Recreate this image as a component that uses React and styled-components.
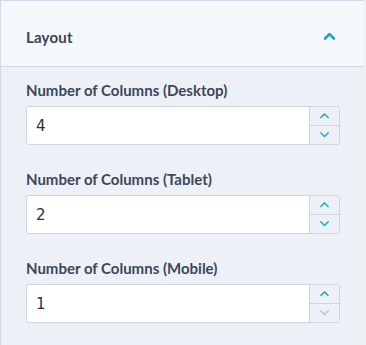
import React, { useState } from "react";
import styled, { createGlobalStyle } from "styled-components";

const Global = createGlobalStyle`
  html, body { margin: 0; padding: 0; background: #f0f0f1; }
  body { font-family: "Lato", "Noto Sans", sans-serif; }
`;

const Panel = styled.section`
  width: 364px;
  height: 345px;
  border-left: 1px solid #d3d9e3;
  border-top: 1px solid #d3d9e3;
  background: #edf1f7;
  box-sizing: border-box;
`;

const Header = styled.div`
  height: 66px;
  box-sizing: border-box;
  display: flex;
  align-items: center;
  justify-content: space-between;
  padding: 6px 29px 0 25px;
  background: #f5f8fb;
  border-bottom: 1px solid #cfd6e0;
`;

const Title = styled.h2`
  margin: 0;
  font-size: 15px;
  font-weight: 700;
  color: #3a4454;
  letter-spacing: 0.2px;
`;

const Toggle = styled.button`
  border: 0;
  background: none;
  padding: 0;
  display: flex;
  color: #1aa5c2;
  cursor: pointer;
`;

const Body = styled.div`
  padding: 13px 24px 0 25px;
  display: flex;
  flex-direction: column;
  gap: 24px;
`;

const Field = styled.div`
  display: flex;
  flex-direction: column;
  gap: 6px;
`;

const Label = styled.label`
  font-size: 15px;
  line-height: 20px;
  font-weight: 700;
  color: #3c4759;
`;

const InputWrap = styled.div`
  display: flex;
  height: 39px;
  box-sizing: border-box;
  border: 1px solid #cdd5e0;
  border-radius: 3px;
  background: #fff;
  overflow: hidden;
`;

const NumberInput = styled.input`
  flex: 1;
  min-width: 0;
  border: 0;
  outline: none;
  padding: 0 9px;
  font-family: "DejaVu Sans", sans-serif;
  font-size: 15px;
  color: #2c3338;
  background: transparent;
`;

const Spinner = styled.div`
  width: 29px;
  display: flex;
  flex-direction: column;
  border-left: 1px solid #cdd5e0;
  background: #edf1f7;
`;

const Step = styled.button`
  flex: 1;
  border: 0;
  padding: 0;
  margin: 0;
  background: transparent;
  display: flex;
  align-items: center;
  justify-content: center;
  color: ${(p) => (p.disabled ? "#b9c2ce" : "#1aa5c2")};
  & + & { border-top: 1px solid #cdd5e0; }
`;

const Chevron = ({ up, size = 10, w = 2 }) => (
  <svg width={size} height={size * 0.6} viewBox="0 0 10 6" fill="none">
    <path
      d={up ? "M1 5 L5 1 L9 5" : "M1 1 L5 5 L9 1"}
      stroke="currentColor"
      strokeWidth={w}
      strokeLinecap="square"
    />
  </svg>
);

const NumberField = ({ label, value, min = 1 }) => {
  const [v, setV] = useState(value);
  return (
    <Field>
      <Label>{label}</Label>
      <InputWrap>
        <NumberInput type="text" value={v} onChange={(e) => setV(e.target.value)} />
        <Spinner>
          <Step onClick={() => setV(Number(v) + 1)}>
            <Chevron up size={9} w={1.6} />
          </Step>
          <Step disabled={Number(v) <= min} onClick={() => setV(Math.max(min, Number(v) - 1))}>
            <Chevron size={9} w={1.6} />
          </Step>
        </Spinner>
      </InputWrap>
    </Field>
  );
};

export default function App() {
  return (
    <>
      <Global />
      <Panel>
        <Header>
          <Title>Layout</Title>
          <Toggle aria-label="Collapse">
            <Chevron up size={11} w={2.4} />
          </Toggle>
        </Header>
        <Body>
          <NumberField label="Number of Columns (Desktop)" value={4} />
          <NumberField label="Number of Columns (Tablet)" value={2} />
          <NumberField label="Number of Columns (Mobile)" value={1} />
        </Body>
      </Panel>
    </>
  );
}
